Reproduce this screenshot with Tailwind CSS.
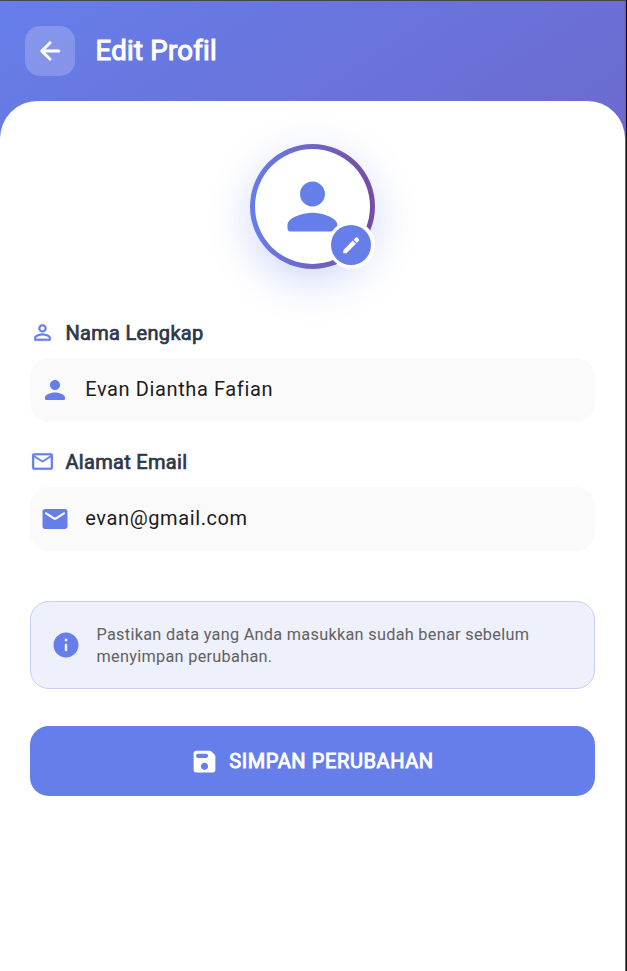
<!DOCTYPE html>
<html lang="id">
<head>
<meta charset="utf-8">
<title>Edit Profil</title>
<script src="https://cdn.jsdelivr.net/npm/@tailwindcss/browser@4"></script>
</head>
<body class="h-[971px] w-[627px] overflow-hidden bg-[#111] font-[Roboto,sans-serif]">
<div class="flex h-[971px] w-[626px] flex-col border-t border-r border-t-[#484848] border-r-[#686868] bg-[linear-gradient(147.2deg,#667eea,#764ba2)]">
  <header class="flex h-[100px] shrink-0 items-center gap-5 pl-[25px]">
    <button class="flex size-[50px] items-center justify-center rounded-[15px] bg-white/20 text-white" aria-label="Kembali">
      <svg class="size-[30px]" viewBox="0 0 24 24" fill="currentColor" stroke="currentColor" stroke-width="0.4"><path d="M19 11H7.83l4.88-4.88c.39-.39.39-1.03 0-1.42-.39-.39-1.02-.39-1.41 0l-6.59 6.59c-.39.39-.39 1.02 0 1.41l6.59 6.59c.39.39 1.02.39 1.41 0 .39-.39.39-1.02 0-1.41L7.83 13H19c.55 0 1-.45 1-1s-.45-1-1-1z"/></svg>
    </button>
    <h1 class="pl-[0.5px] text-[27.5px] leading-8 tracking-[0.28px] text-white [-webkit-text-stroke:1.1px_currentColor]">Edit Profil</h1>
  </header>
  <main class="flex grow flex-col rounded-t-[37.5px] bg-white px-[30px] pt-[42.5px]">
    <div class="relative size-[125px] self-center rounded-full bg-[linear-gradient(90deg,#667eea,#764ba2)] p-[5px] shadow-[0_12.5px_42px_rgba(102,126,234,0.3)]">
      <div class="flex size-full items-center justify-center rounded-full bg-white text-[#667eea]">
        <svg class="size-[75px]" viewBox="0 0 24 24" fill="currentColor"><path d="M12 12c2.21 0 4-1.79 4-4s-1.79-4-4-4-4 1.79-4 4 1.79 4 4 4zm0 2c-2.67 0-8 1.34-8 4v1c0 .55.45 1 1 1h14c.55 0 1-.45 1-1v-1c0-2.66-5.33-4-8-4z"/></svg>
      </div>
      <div class="absolute right-0 bottom-0 flex size-[47.5px] items-center justify-center rounded-full bg-white">
        <div class="flex size-10 items-center justify-center rounded-full bg-[#667eea] text-white">
          <svg class="size-[22.5px]" viewBox="0 0 24 24" fill="currentColor"><path d="M3.500 17.800V20c0 .3.2.5.5.5h2.600c.3 0 .5-.1.7-.3L17 10.500 13.500 7 3.800 17.100c-.2.2-.3.4-.3.7zM20 7.500c.7-.7.7-1.600 0-2.300L18.800 4c-.7-.7-1.600-.7-2.300 0l-2 2L18 9.500z"/></svg>
        </div>
      </div>
    </div>
    <div class="mt-[51.5px] flex h-[25px] items-center gap-[10.5px]">
      <svg class="size-[25px] text-[#667eea]" viewBox="0 0 24 24" fill="currentColor" stroke="currentColor" stroke-width="0.2"><path d="M12 5.9c1.16 0 2.1.94 2.1 2.1s-.94 2.1-2.1 2.1S9.9 9.16 9.9 8s.94-2.1 2.1-2.1m0 9c2.97 0 6.1 1.46 6.1 2.1v1.1H5.9V17c0-.64 3.13-2.1 6.1-2.1M12 4C9.79 4 8 5.79 8 8s1.79 4 4 4 4-1.79 4-4-1.79-4-4-4zm0 9c-2.67 0-8 1.34-8 4v2c0 .55.45 1 1 1h14c.55 0 1-.45 1-1v-2c0-2.66-5.33-4-8-4z"/></svg>
      <span class="text-xl leading-6 tracking-[0.3px] text-[#2d3748] [-webkit-text-stroke:0.7px_currentColor]">Nama Lengkap</span>
    </div>
    <div class="mt-[12.5px] flex h-[64.5px] items-center gap-[15px] rounded-[18.75px] bg-[#fafafa] px-[10px]">
      <svg class="size-[30px] text-[#667eea]" viewBox="0 0 24 24" fill="currentColor"><path d="M12 12c2.21 0 4-1.79 4-4s-1.79-4-4-4-4 1.79-4 4 1.79 4 4 4zm0 2c-2.67 0-8 1.34-8 4v1c0 .55.45 1 1 1h14c.55 0 1-.45 1-1v-1c0-2.66-5.33-4-8-4z"/></svg>
      <span class="pb-[2px] pl-[0.25px] text-xl leading-6 tracking-[0.61px] text-[#1d1b20]">Evan Diantha Fafian</span>
    </div>
    <div class="mt-[27px] flex h-[25px] items-center gap-[10.5px]">
      <svg class="size-[25px] text-[#667eea]" viewBox="0 0 24 24" fill="currentColor" stroke="currentColor" stroke-width="0.2"><path d="M22 6c0-1.100-.9-2-2-2H4c-1.100 0-2 .9-2 2v12c0 1.100.9 2 2 2h16c1.100 0 2-.9 2-2V6zm-2 0-8 5-8-5h16zm0 12H4V8l8 5 8-5v10z"/></svg>
      <span class="text-xl leading-6 tracking-[0.3px] text-[#2d3748] [-webkit-text-stroke:0.7px_currentColor]">Alamat Email</span>
    </div>
    <div class="mt-[12.5px] flex h-[64.5px] items-center gap-[15px] rounded-[18.75px] bg-[#fafafa] px-[10px]">
      <svg class="size-[30px] text-[#667eea]" viewBox="0 0 24 24" fill="currentColor"><path d="M20 4H4c-1.100 0-2 .9-2 2v12c0 1.100.9 2 2 2h16c1.100 0 2-.9 2-2V6c0-1.100-.9-2-2-2zm-.4 4.250-6.540 4.090c-.65.41-1.470.41-2.120 0L4.400 8.250c-.25-.16-.4-.43-.4-.72 0-.67.73-1.070 1.300-.72L12 11l6.700-4.190c.57-.35 1.300.05 1.300.72 0 .29-.15.56-.4.72z"/></svg>
      <span class="pb-[2px] pl-[0.25px] text-xl leading-6 tracking-[0.61px] text-[#1d1b20]">evan@gmail.com</span>
    </div>
    <div class="mt-[50px] flex h-[87.5px] items-center gap-[15.5px] rounded-[18.75px] border-[1.25px] border-[#c6cff8] bg-[#eef0fc] px-5">
      <svg class="size-[30px] shrink-0 text-[#667eea]" viewBox="0 0 24 24" fill="currentColor"><path d="M12 2C6.480 2 2 6.480 2 12s4.480 10 10 10 10-4.480 10-10S17.520 2 12 2zm0 15c-.55 0-1-.45-1-1v-4c0-.55.45-1 1-1s1 .45 1 1v4c0 .55-.45 1-1 1zm1-8h-2V7h2v2z"/></svg>
      <p class="pt-[2px] text-[16.25px] leading-[22px] tracking-[0.3px] text-[#616161]">Pastikan data yang Anda masukkan sudah benar sebelum<br>menyimpan perubahan.</p>
    </div>
    <button class="mt-[37.5px] flex h-[70px] items-center justify-center gap-[10px] rounded-[18.75px] bg-[#667eea] pr-[1px] text-white">
      <svg class="mt-px size-[29px]" viewBox="0 0 24 24" fill="currentColor"><path d="M17.590 3.590c-.38-.38-.89-.59-1.420-.59H5c-1.110 0-2 .9-2 2v14c0 1.100.9 2 2 2h14c1.100 0 2-.9 2-2V7.830c0-.53-.21-1.040-.59-1.410l-2.820-2.830zM12 19c-1.660 0-3-1.340-3-3s1.340-3 3-3 3 1.340 3 3-1.340 3-3 3zm3-11.700c0 .94-.76 1.700-1.700 1.700H6.700C5.760 9 5 8.240 5 7.300S5.760 5.600 6.700 5.600h6.600c.94 0 1.700.76 1.700 1.700z" fill-rule="evenodd"/></svg>
      <span class="text-xl leading-6 tracking-[0.6px] [-webkit-text-stroke:0.9px_currentColor]">SIMPAN PERUBAHAN</span>
    </button>
  </main>
</div>
</body>
</html>
